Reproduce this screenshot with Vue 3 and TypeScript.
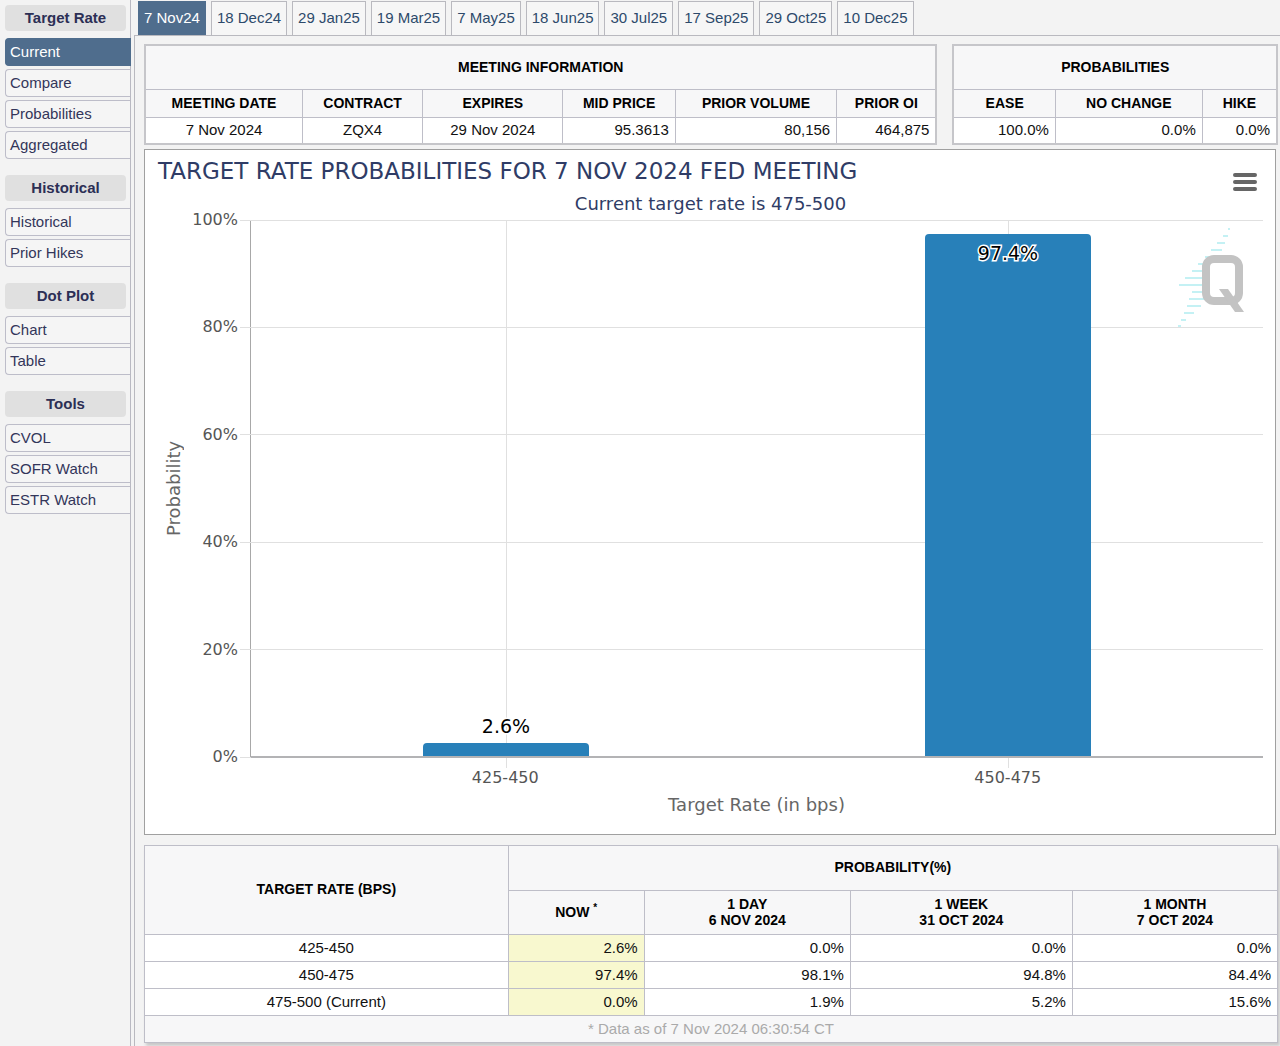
<script setup lang="ts">
interface MenuGroup {
  title: string
  items: string[]
}

interface RateBar {
  range: string
  value: number
}

const menu: MenuGroup[] = [
  { title: 'Target Rate', items: ['Current', 'Compare', 'Probabilities', 'Aggregated'] },
  { title: 'Historical', items: ['Historical', 'Prior Hikes'] },
  { title: 'Dot Plot', items: ['Chart', 'Table'] },
  { title: 'Tools', items: ['CVOL', 'SOFR Watch', 'ESTR Watch'] },
]

const meetings: string[] = [
  '7 Nov24', '18 Dec24', '29 Jan25', '19 Mar25', '7 May25',
  '18 Jun25', '30 Jul25', '17 Sep25', '29 Oct25', '10 Dec25',
]

const ticks: number[] = [100, 80, 60, 40, 20, 0]

const bars: RateBar[] = [
  { range: '425-450', value: 2.6 },
  { range: '450-475', value: 97.4 },
]

const history: string[][] = [
  ['425-450', '2.6%', '0.0%', '0.0%', '0.0%'],
  ['450-475', '97.4%', '98.1%', '94.8%', '84.4%'],
  ['475-500 (Current)', '0.0%', '1.9%', '5.2%', '15.6%'],
]

/* Logo stripes: y, start x, end x */
const stripes: number[][] = [
  [2, 50, 52], [9, 45, 50], [16, 39, 47], [23, 33, 44], [30, 27, 36],
  [37, 20, 27], [44, 14, 26], [51, 7, 26], [58, 1, 26], [65, 14, 26],
  [72, 11, 27], [79, 9, 23], [86, 6, 16], [93, 3, 8], [99, 0, 3],
]
</script>

<template>
  <div class="page">
    <nav class="sidebar" aria-label="Tool views">
      <section v-for="group in menu" :key="group.title" class="group">
        <h2 class="group-title">{{ group.title }}</h2>
        <a
          v-for="item in group.items"
          :key="item"
          href="#"
          class="item"
          :class="{ active: item === 'Current' }"
        >{{ item }}</a>
      </section>
    </nav>

    <div class="content">
      <nav class="tabs" aria-label="Meetings">
        <a
          v-for="(meeting, i) in meetings"
          :key="meeting"
          href="#"
          class="tab"
          :class="{ active: i === 0 }"
        >{{ meeting }}</a>
      </nav>

      <main class="main">
        <div class="summary">
          <table class="data meeting">
            <colgroup>
              <col style="width: 19.9%" /><col style="width: 15.2%" /><col style="width: 17.7%" />
              <col style="width: 14.2%" /><col style="width: 20.4%" /><col style="width: 12.6%" />
            </colgroup>
            <thead>
              <tr class="caption"><th colspan="6">MEETING INFORMATION</th></tr>
              <tr>
                <th>MEETING DATE</th><th>CONTRACT</th><th>EXPIRES</th>
                <th>MID PRICE</th><th>PRIOR VOLUME</th><th>PRIOR OI</th>
              </tr>
            </thead>
            <tbody>
              <tr>
                <td class="mid">7 Nov 2024</td><td class="mid">ZQX4</td><td class="mid">29 Nov 2024</td>
                <td>95.3613</td><td>80,156</td><td>464,875</td>
              </tr>
            </tbody>
          </table>

          <table class="data outlook">
            <colgroup>
              <col style="width: 31.5%" /><col style="width: 45.4%" /><col style="width: 23.1%" />
            </colgroup>
            <thead>
              <tr class="caption"><th colspan="3">PROBABILITIES</th></tr>
              <tr><th>EASE</th><th>NO CHANGE</th><th>HIKE</th></tr>
            </thead>
            <tbody>
              <tr><td>100.0%</td><td>0.0%</td><td>0.0%</td></tr>
            </tbody>
          </table>
        </div>

        <section class="chart">
          <h1 class="chart-title">TARGET RATE PROBABILITIES FOR 7 NOV 2024 FED MEETING</h1>
          <p class="chart-subtitle">Current target rate is 475-500</p>
          <button class="menu-button" type="button" aria-label="Chart menu">
            <svg width="24" height="18" viewBox="0 0 24 18">
              <path d="M2 2H22M2 9H22M2 16H22" stroke="#666" stroke-width="4" stroke-linecap="round" />
            </svg>
          </button>

          <div class="chart-body">
            <div class="y-title">Probability</div>
            <div class="y-labels">
              <span v-for="tick in ticks" :key="tick">{{ tick }}%</span>
            </div>
            <div class="plot">
              <svg class="grid-lines" width="100%" height="100%" shape-rendering="crispEdges">
                <line
                  v-for="tick in ticks"
                  :key="tick"
                  x1="-11"
                  x2="100%"
                  :y1="`${100 - tick}%`"
                  :y2="`${100 - tick}%`"
                />
              </svg>
              <div v-for="bar in bars" :key="bar.range" class="band">
                <span v-if="bar.value < 50" class="value">{{ bar.value }}%</span>
                <div class="bar" :style="{ height: bar.value + '%' }">
                  <span v-if="bar.value >= 50" class="value">{{ bar.value }}%</span>
                </div>
              </div>
              <svg class="logo" width="68" height="101" viewBox="0 0 68 101" aria-hidden="true">
                <path
                  v-for="s in stripes"
                  :key="s[0]"
                  :d="`M${s[1]} ${s[0]}H${s[2]}`"
                  stroke="#c4f1f4"
                  stroke-width="2"
                />
                <rect x="28" y="32" width="33" height="42" rx="8" fill="#fff" stroke="#c3c3c3" stroke-width="8" />
                <path d="M41 62H50L66 85H57Z" fill="#c3c3c3" />
              </svg>
            </div>
            <div class="x-labels">
              <span v-for="bar in bars" :key="bar.range">{{ bar.range }}</span>
            </div>
            <div class="x-title">Target Rate (in bps)</div>
          </div>
        </section>

        <table class="data history">
          <colgroup>
            <col style="width: 32.1%" /><col style="width: 12%" /><col style="width: 18.2%" />
            <col style="width: 19.6%" /><col style="width: 18.1%" />
          </colgroup>
          <thead>
            <tr class="caption">
              <th rowspan="2">TARGET RATE (BPS)</th>
              <th colspan="4">PROBABILITY(%)</th>
            </tr>
            <tr class="periods">
              <th>NOW <sup>*</sup></th>
              <th>1 DAY<br />6 NOV 2024</th>
              <th>1 WEEK<br />31 OCT 2024</th>
              <th>1 MONTH<br />7 OCT 2024</th>
            </tr>
          </thead>
          <tbody>
            <tr v-for="row in history" :key="row[0]">
              <td
                v-for="(cell, i) in row"
                :key="i"
                :class="{ mid: i === 0, now: i === 1 }"
              >{{ cell }}</td>
            </tr>
          </tbody>
          <tfoot>
            <tr><td colspan="5" class="note">* Data as of 7 Nov 2024 06:30:54 CT</td></tr>
          </tfoot>
        </table>
      </main>
    </div>
  </div>
</template>

<style>
body {
  margin: 0;
  background: #f3f3f3;
}
</style>

<style scoped>
* {
  box-sizing: border-box;
}

.page {
  display: flex;
  min-height: 100vh;
  font: 15px/18px "Liberation Sans", Arial, sans-serif;
  color: #111;
}

.sidebar {
  flex: none;
  width: 131px;
  padding: 5px 0 0 5px;
  border-right: 1px solid #b9b9c2;
}

.group {
  display: flex;
  flex-direction: column;
  gap: 3px;
  margin-bottom: 16px;
}

.group-title {
  margin: 0 4px 4px 0;
  border-radius: 4px;
  background: #e0e0e0;
  color: #2c2f55;
  font-size: 15px;
  line-height: 26px;
  text-align: center;
}

.item {
  padding: 0 4px;
  border: 1px solid #bdbdc9;
  border-right: 0;
  border-radius: 4px 0 0 4px;
  background: #f5f5f5;
  color: #33365a;
  line-height: 26px;
  text-decoration: none;
}

.item.active {
  margin-right: -1px;
  border-color: #4f6d8d;
  background: #4f6d8d;
  color: #fff;
}

.content {
  flex: 1;
  min-width: 0;
  display: flex;
  flex-direction: column;
  margin-left: 3px;
}

.tabs {
  display: flex;
  gap: 5px;
  padding: 1px 0 0 4px;
}

.tab {
  padding: 0 5px 1px;
  border: 1px solid #b9b9bf;
  border-bottom: 0;
  background: #f6f6f6;
  color: #2d4a6b;
  line-height: 32px;
  white-space: nowrap;
  text-decoration: none;
}

.tab.active {
  border-color: #4f6d8d;
  background: #4f6d8d;
  color: #fff;
}

.main {
  flex: 1;
  display: flex;
  flex-direction: column;
  padding: 8px 2px 4px 9px;
  border-top: 1px solid #b9b9bf;
  border-left: 1px solid #b9b9bf;
}

.summary {
  display: flex;
  align-items: flex-start;
  gap: 15px;
}

.data {
  border-collapse: collapse;
  table-layout: fixed;
  background: #fff;
}

.meeting {
  flex: 795 1 0;
  border: 2px solid #c6c6ca;
}

.outlook {
  flex: 325 1 0;
  border: 2px solid #c6c6ca;
}

.data th,
.data td {
  border: 1px solid #bebec8;
}

.data th {
  height: 28px;
  padding: 0;
  background: #f7f7f8;
  color: #000;
  font-size: 14px;
  line-height: 16px;
}

.data td {
  height: 27px;
  padding: 0 6px;
  text-align: right;
}

.data .mid {
  text-align: center;
}

.data .caption th {
  height: 44px;
}

.chart {
  position: relative;
  margin: 4px 2px 10px 0;
  padding: 7px 12px 19px 13px;
  border: 1px solid #a0a0a0;
  background: #fff;
  font-family: "DejaVu Sans", Verdana, sans-serif;
}

.chart-title {
  margin: 0;
  color: #2f3c66;
  font-size: 23px;
  font-weight: 400;
  line-height: 28px;
}

.chart-subtitle {
  margin: 7px 0 4px;
  color: #2f3c66;
  font-size: 18px;
  line-height: 24px;
  text-align: center;
}

.menu-button {
  position: absolute;
  top: 23px;
  right: 18px;
  padding: 0;
  border: 0;
  background: none;
}

.menu-button svg {
  display: block;
}

.chart-body {
  display: grid;
  grid-template-columns: 32px 48px 1fr;
  grid-template-rows: 537px auto auto;
}

.y-title {
  color: #666;
  font-size: 18px;
  line-height: 32px;
  text-align: center;
  writing-mode: vertical-rl;
  transform: rotate(180deg);
}

.y-labels {
  display: flex;
  flex-direction: column;
  justify-content: space-between;
  margin: -10px 0;
  color: #555;
  font-size: 16px;
  line-height: 20px;
  text-align: right;
}

.plot {
  position: relative;
  display: flex;
  margin-left: 12px;
  padding: 0 4px;
  border-left: 1px solid #a8a8a8;
}

.plot::after {
  content: "";
  position: absolute;
  inset: auto 0 -1px 0;
  height: 2px;
  background: #b3b3b5;
}

.grid-lines {
  position: absolute;
  inset: 0;
  overflow: visible;
  stroke: #e0e0e0;
}

.band {
  position: relative;
  flex: 1;
  display: flex;
  flex-direction: column;
  justify-content: flex-end;
  align-items: center;
}

.band::before {
  content: "";
  position: absolute;
  top: 0;
  bottom: -11px;
  left: 50%;
  width: 1px;
  background: #e0e0e0;
}

.bar {
  position: relative;
  width: 33%;
  padding-top: 8px;
  border-radius: 4px 4px 0 0;
  background: #2880b9;
  text-align: center;
}

.value {
  position: relative;
  margin-bottom: 6px;
  color: #000;
  font-size: 19px;
  line-height: 22px;
  -webkit-text-stroke: 3px #fff;
  paint-order: stroke fill;
}

.logo {
  position: absolute;
  top: 7px;
  right: 17px;
}

.x-labels {
  grid-column: 3;
  display: flex;
  margin-left: 12px;
  padding: 11px 4px 0;
  color: #555;
  font-size: 16px;
  line-height: 20px;
  text-align: center;
}

.x-labels span {
  flex: 1;
}

.x-title {
  grid-column: 3;
  margin: 7px 0 0 12px;
  color: #666;
  font-size: 18px;
  line-height: 20px;
  text-align: center;
}

.history {
  width: 100%;
  box-shadow: 2px 3px 3px #c8c8c8;
}

.history th {
  padding-bottom: 2px;
}

.history .caption th {
  height: 45px;
}

.data .periods th {
  height: 44px;
}

sup {
  font-size: 10px;
  line-height: 10px;
}

.data .now {
  background: #f8f8cf;
}

.data .note {
  background: #f7f7f8;
  color: #aaa;
  text-align: center;
}
</style>
